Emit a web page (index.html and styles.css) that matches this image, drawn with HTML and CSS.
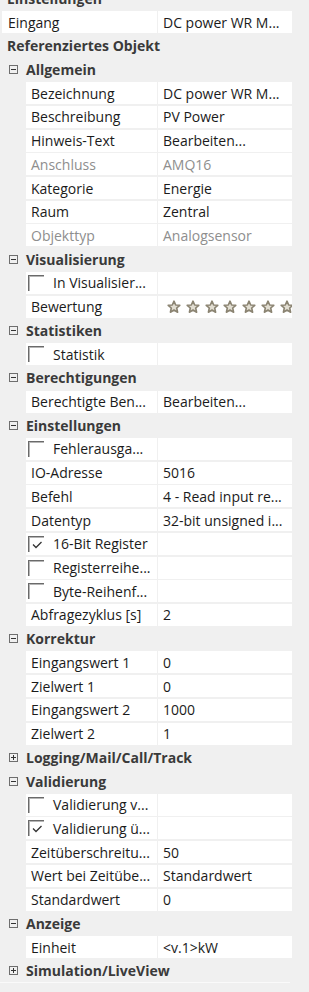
FILE: index.html
```html
<!DOCTYPE html>
<html>
<head>
<meta charset="utf-8">
<link rel="stylesheet" href="styles.css">
</head>
<body>
<div class="grid">
  <div class="row cat top"><span class="ct">Einstellungen</span></div>
  <div class="row prop top"><div class="k">Eingang</div><div class="v">DC power WR M...</div></div>
  <div class="row cat top"><span class="ct">Referenziertes Objekt</span></div>

  <div class="row cat"><span class="tog minus"></span><span class="ct">Allgemein</span></div>
  <div class="row prop"><div class="k">Bezeichnung</div><div class="v">DC power WR M...</div></div>
  <div class="row prop"><div class="k">Beschreibung</div><div class="v">PV Power</div></div>
  <div class="row prop"><div class="k">Hinweis-Text</div><div class="v">Bearbeiten...</div></div>
  <div class="row prop dis"><div class="k">Anschluss</div><div class="v">AMQ16</div></div>
  <div class="row prop"><div class="k">Kategorie</div><div class="v">Energie</div></div>
  <div class="row prop"><div class="k">Raum</div><div class="v">Zentral</div></div>
  <div class="row prop dis"><div class="k">Objekttyp</div><div class="v">Analogsensor</div></div>

  <div class="row cat"><span class="tog minus"></span><span class="ct">Visualisierung</span></div>
  <div class="row prop"><div class="k chk"><span class="cb"></span>In Visualisier...</div><div class="v"></div></div>
  <div class="row prop"><div class="k">Bewertung</div><div class="v stars">
    <svg class="star" viewBox="0 0 14 14"><path d="M7 1.2 L8.7 5 L12.8 5.3 L9.7 8 L10.6 12.2 L7 10 L3.4 12.2 L4.3 8 L1.2 5.3 L5.3 5 Z"/></svg>
    <svg class="star" viewBox="0 0 14 14"><path d="M7 1.2 L8.7 5 L12.8 5.3 L9.7 8 L10.6 12.2 L7 10 L3.4 12.2 L4.3 8 L1.2 5.3 L5.3 5 Z"/></svg>
    <svg class="star" viewBox="0 0 14 14"><path d="M7 1.2 L8.7 5 L12.8 5.3 L9.7 8 L10.6 12.2 L7 10 L3.4 12.2 L4.3 8 L1.2 5.3 L5.3 5 Z"/></svg>
    <svg class="star" viewBox="0 0 14 14"><path d="M7 1.2 L8.7 5 L12.8 5.3 L9.7 8 L10.6 12.2 L7 10 L3.4 12.2 L4.3 8 L1.2 5.3 L5.3 5 Z"/></svg>
    <svg class="star" viewBox="0 0 14 14"><path d="M7 1.2 L8.7 5 L12.8 5.3 L9.7 8 L10.6 12.2 L7 10 L3.4 12.2 L4.3 8 L1.2 5.3 L5.3 5 Z"/></svg>
    <svg class="star" viewBox="0 0 14 14"><path d="M7 1.2 L8.7 5 L12.8 5.3 L9.7 8 L10.6 12.2 L7 10 L3.4 12.2 L4.3 8 L1.2 5.3 L5.3 5 Z"/></svg>
    <svg class="star" viewBox="0 0 14 14"><path d="M7 1.2 L8.7 5 L12.8 5.3 L9.7 8 L10.6 12.2 L7 10 L3.4 12.2 L4.3 8 L1.2 5.3 L5.3 5 Z"/></svg>
  </div></div>

  <div class="row cat"><span class="tog minus"></span><span class="ct">Statistiken</span></div>
  <div class="row prop"><div class="k chk"><span class="cb"></span>Statistik</div><div class="v"></div></div>

  <div class="row cat"><span class="tog minus"></span><span class="ct">Berechtigungen</span></div>
  <div class="row prop"><div class="k">Berechtigte Ben...</div><div class="v">Bearbeiten...</div></div>

  <div class="row cat"><span class="tog minus"></span><span class="ct">Einstellungen</span></div>
  <div class="row prop"><div class="k chk"><span class="cb"></span>Fehlerausga...</div><div class="v"></div></div>
  <div class="row prop"><div class="k">IO-Adresse</div><div class="v">5016</div></div>
  <div class="row prop"><div class="k">Befehl</div><div class="v">4 - Read input re...</div></div>
  <div class="row prop"><div class="k">Datentyp</div><div class="v">32-bit unsigned i...</div></div>
  <div class="row prop"><div class="k chk"><span class="cb on"><svg viewBox="0 0 16 16"><path d="M5 8.5 L8 11.5 L13.5 6"/></svg></span>16-Bit Register</div><div class="v"></div></div>
  <div class="row prop"><div class="k chk"><span class="cb"></span>Registerreihe...</div><div class="v"></div></div>
  <div class="row prop"><div class="k chk"><span class="cb"></span>Byte-Reihenf...</div><div class="v"></div></div>
  <div class="row prop"><div class="k">Abfragezyklus [s]</div><div class="v">2</div></div>

  <div class="row cat"><span class="tog minus"></span><span class="ct">Korrektur</span></div>
  <div class="row prop"><div class="k">Eingangswert 1</div><div class="v">0</div></div>
  <div class="row prop"><div class="k">Zielwert 1</div><div class="v">0</div></div>
  <div class="row prop"><div class="k">Eingangswert 2</div><div class="v">1000</div></div>
  <div class="row prop"><div class="k">Zielwert 2</div><div class="v">1</div></div>

  <div class="row cat"><span class="tog plus"></span><span class="ct">Logging/Mail/Call/Track</span></div>

  <div class="row cat"><span class="tog minus"></span><span class="ct">Validierung</span></div>
  <div class="row prop"><div class="k chk"><span class="cb"></span>Validierung v...</div><div class="v"></div></div>
  <div class="row prop"><div class="k chk"><span class="cb on"><svg viewBox="0 0 16 16"><path d="M5 8.5 L8 11.5 L13.5 6"/></svg></span>Validierung ü...</div><div class="v"></div></div>
  <div class="row prop"><div class="k">Zeitüberschreitu...</div><div class="v">50</div></div>
  <div class="row prop"><div class="k">Wert bei Zeitübe...</div><div class="v">Standardwert</div></div>
  <div class="row prop"><div class="k">Standardwert</div><div class="v">0</div></div>

  <div class="row cat"><span class="tog minus"></span><span class="ct">Anzeige</span></div>
  <div class="row prop"><div class="k">Einheit</div><div class="v">&lt;v.1&gt;kW</div></div>

  <div class="row cat"><span class="tog plus"></span><span class="ct">Simulation/LiveView</span></div>
</div>
<div class="footer"></div>
</body>
</html>
```

FILE: styles.css
```css
html, body {
  margin: 0;
  padding: 0;
  background: #f0f0f0;
  overflow: hidden;
}
body {
  width: 309px;
  height: 992px;
  font-family: "Open Sans", "Noto Sans", sans-serif;
  font-size: 14px;
  color: #1b1b1b;
}
.grid {
  display: flex;
  flex-direction: column;
  gap: 1.73px;
  width: 290px;
  margin: -12.73px 0 0 2px;
}
.row {
  height: 22px;
  display: flex;
  align-items: center;
  margin-left: 24px;
  white-space: nowrap;
  overflow: hidden;
}
.row.top {
  margin-left: 0;
}
.prop {
  display: grid;
  grid-template-columns: 1fr 134px;
  column-gap: 1px;
  align-items: stretch;
}
.k, .v {
  background: #fff;
  display: flex;
  align-items: center;
  padding-left: 5px;
  overflow: hidden;
  white-space: nowrap;
}
.top .k {
  padding-left: 6px;
}
.dis .k, .dis .v {
  color: #8e8e8e;
}
.cat {
  margin-left: 0;
  font-weight: bold;
  color: #3a3a3a;
}
.cat .ct {
  padding-left: 5px;
}
.tog {
  box-sizing: border-box;
  width: 9px;
  height: 9px;
  border: 1px solid #6e6e6e;
  margin-left: 7px;
  margin-right: 8px;
  position: relative;
  flex: none;
}
.tog::before {
  content: "";
  position: absolute;
  left: 1px;
  top: 3px;
  width: 5px;
  height: 1px;
  background: #333;
}
.plus::after {
  content: "";
  position: absolute;
  left: 3px;
  top: 1px;
  width: 1px;
  height: 5px;
  background: #333;
}
.cat .tog + .ct {
  padding-left: 0;
}
.chk {
  padding-left: 2px;
}
.cb {
  box-sizing: border-box;
  width: 16px;
  height: 16px;
  border-top: 1px solid #6a6a6a;
  border-left: 1px solid #6a6a6a;
  box-shadow: inset 1px 1px 0 #b5b5b5;
  margin-right: 9px;
  flex: none;
  position: relative;
}
.cb svg {
  position: absolute;
  left: -1px;
  top: -1px;
  width: 16px;
  height: 16px;
}
.cb svg path {
  fill: none;
  stroke: #333;
  stroke-width: 1.3;
}
.stars {
  padding-left: 9px;
  gap: 4.8px;
}
.star {
  width: 14px;
  height: 14px;
  flex: none;
}
.star path {
  fill: #e2ded2;
  stroke: #8b8472;
  stroke-width: 1.6;
  stroke-linejoin: round;
}
.footer {
  margin-top: 0;
  height: 1px;
  width: 290px;
  background: #fafafa;
}
```
